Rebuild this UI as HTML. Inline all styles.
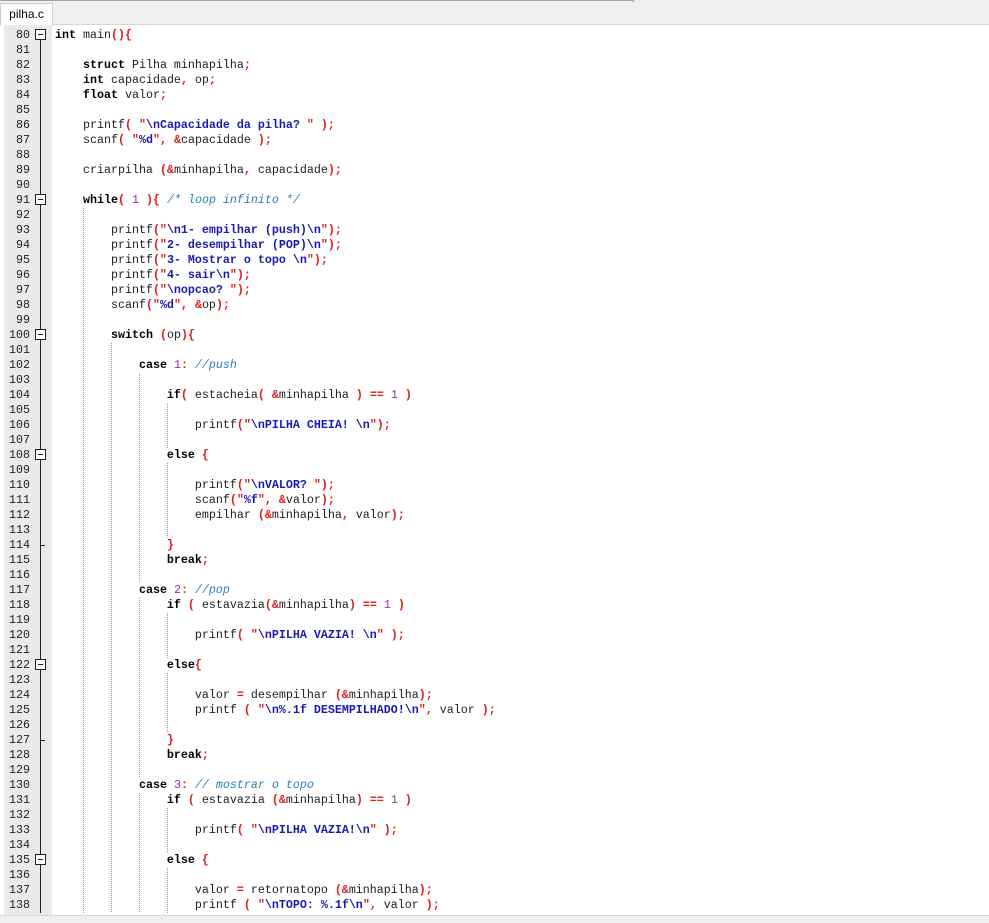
<!DOCTYPE html>
<html><head><meta charset="utf-8"><style>
html,body{margin:0;padding:0}
body{width:989px;height:922px;position:relative;overflow:hidden;background:#fff;font-family:"Liberation Mono",monospace}
#tabbar{position:absolute;left:0;top:0;width:989px;height:24px;background:#f0f0f0;border-bottom:1px solid #d6d6d6}
#topline{position:absolute;left:0;top:0;width:633px;height:1px;background:#a0a0a0}
#topline2{position:absolute;left:633px;top:0;width:1px;height:2px;background:#a0a0a0}
#tab{position:absolute;left:0;top:3px;width:51px;height:22px;background:#fff;border:1px solid #d0d0d0;border-bottom:none;font:12px "Liberation Sans",sans-serif;color:#000;line-height:20px;text-align:center}
#gutter{position:absolute;left:4px;top:25px;width:48px;height:890px;background:#eaeaea}
#nums{position:absolute;left:0;top:28px;width:30px;text-align:right;font-size:11.67px;line-height:15px;color:#222}
#fold{position:absolute;left:40px;top:35px;width:1px;height:878px;background:#222}
.box{position:absolute;left:35px;width:9px;height:9px;border:1px solid #222;background:#fff}
.box:after{content:"";position:absolute;left:2px;top:4px;width:5px;height:1px;background:#222}
.tick{position:absolute;left:40px;width:5px;height:1px;background:#222}
#code{position:absolute;left:55px;top:28px;font-size:11.67px;line-height:15px;white-space:pre;color:#1e1e1e}
.k{font-weight:bold;color:#000}
.p{font-weight:bold;color:#e01b1b}
.s{font-weight:bold;color:#1a1ab0}
.n{color:#9035a5}
.c{font-style:italic;color:#2a7fba}
.g{position:absolute;width:1px;background:repeating-linear-gradient(to bottom,#9a9a9a 0 1px,transparent 1px 2px)}
#bottom{position:absolute;left:0;top:915px;width:989px;height:7px;background:#f0f0f0;border-top:1px solid #d6d6d6}
</style></head><body>
<div id="tabbar"></div><div id="topline"></div><div id="topline2"></div>
<div id="tab">pilha.c</div>
<div id="gutter"></div>
<div id="nums">80<br>81<br>82<br>83<br>84<br>85<br>86<br>87<br>88<br>89<br>90<br>91<br>92<br>93<br>94<br>95<br>96<br>97<br>98<br>99<br>100<br>101<br>102<br>103<br>104<br>105<br>106<br>107<br>108<br>109<br>110<br>111<br>112<br>113<br>114<br>115<br>116<br>117<br>118<br>119<br>120<br>121<br>122<br>123<br>124<br>125<br>126<br>127<br>128<br>129<br>130<br>131<br>132<br>133<br>134<br>135<br>136<br>137<br>138</div>
<div id="fold"></div>
<div class="box" style="top:29px"></div>
<div class="box" style="top:194px"></div>
<div class="box" style="top:329px"></div>
<div class="box" style="top:449px"></div>
<div class="box" style="top:659px"></div>
<div class="box" style="top:854px"></div>
<div class="tick" style="top:545px"></div>
<div class="tick" style="top:740px"></div>

<div class="g" style="left:83px;top:208px;height:705px"></div>
<div class="g" style="left:111px;top:343px;height:570px"></div>
<div class="g" style="left:139px;top:373px;height:210px"></div>
<div class="g" style="left:139px;top:598px;height:180px"></div>
<div class="g" style="left:139px;top:793px;height:120px"></div>
<div class="g" style="left:167px;top:403px;height:45px"></div>
<div class="g" style="left:167px;top:463px;height:75px"></div>
<div class="g" style="left:167px;top:613px;height:45px"></div>
<div class="g" style="left:167px;top:673px;height:60px"></div>
<div class="g" style="left:167px;top:808px;height:45px"></div>
<div class="g" style="left:167px;top:868px;height:45px"></div>

<div id="code"><span class="k">int</span> main<span class="p">(){</span>

    <span class="k">struct</span> Pilha minhapilha<span class="p">;</span>
    <span class="k">int</span> capacidade<span class="p">,</span> op<span class="p">;</span>
    <span class="k">float</span> valor<span class="p">;</span>

    printf<span class="p">(</span> <span class="p">"</span><span class="s">\nCapacidade da pilha? </span><span class="p">"</span> <span class="p">);</span>
    scanf<span class="p">(</span> <span class="p">"</span><span class="s">%d</span><span class="p">",</span> <span class="p">&amp;</span>capacidade <span class="p">);</span>

    criarpilha <span class="p">(&amp;</span>minhapilha<span class="p">,</span> capacidade<span class="p">);</span>

    <span class="k">while</span><span class="p">(</span> <span class="n">1</span> <span class="p">){</span> <span class="c">/* loop infinito */</span>

        printf<span class="p">("</span><span class="s">\n1- empilhar (push)\n</span><span class="p">");</span>
        printf<span class="p">("</span><span class="s">2- desempilhar (POP)\n</span><span class="p">");</span>
        printf<span class="p">("</span><span class="s">3- Mostrar o topo \n</span><span class="p">");</span>
        printf<span class="p">("</span><span class="s">4- sair\n</span><span class="p">");</span>
        printf<span class="p">("</span><span class="s">\nopcao? </span><span class="p">");</span>
        scanf<span class="p">("</span><span class="s">%d</span><span class="p">",</span> <span class="p">&amp;</span>op<span class="p">);</span>

        <span class="k">switch</span> <span class="p">(</span>op<span class="p">){</span>

            <span class="k">case</span> <span class="n">1</span><span class="p">:</span> <span class="c">//push</span>

                <span class="k">if</span><span class="p">(</span> estacheia<span class="p">(</span> <span class="p">&amp;</span>minhapilha <span class="p">)</span> <span class="p">==</span> <span class="n">1</span> <span class="p">)</span>

                    printf<span class="p">("</span><span class="s">\nPILHA CHEIA! \n</span><span class="p">");</span>

                <span class="k">else</span> <span class="p">{</span>

                    printf<span class="p">("</span><span class="s">\nVALOR? </span><span class="p">");</span>
                    scanf<span class="p">("</span><span class="s">%f</span><span class="p">",</span> <span class="p">&amp;</span>valor<span class="p">);</span>
                    empilhar <span class="p">(&amp;</span>minhapilha<span class="p">,</span> valor<span class="p">);</span>

                <span class="p">}</span>
                <span class="k">break</span><span class="p">;</span>

            <span class="k">case</span> <span class="n">2</span><span class="p">:</span> <span class="c">//pop</span>
                <span class="k">if</span> <span class="p">(</span> estavazia<span class="p">(&amp;</span>minhapilha<span class="p">)</span> <span class="p">==</span> <span class="n">1</span> <span class="p">)</span>

                    printf<span class="p">(</span> <span class="p">"</span><span class="s">\nPILHA VAZIA! \n</span><span class="p">"</span> <span class="p">);</span>

                <span class="k">else</span><span class="p">{</span>

                    valor <span class="p">=</span> desempilhar <span class="p">(&amp;</span>minhapilha<span class="p">);</span>
                    printf <span class="p">(</span> <span class="p">"</span><span class="s">\n%.1f DESEMPILHADO!\n</span><span class="p">",</span> valor <span class="p">);</span>

                <span class="p">}</span>
                <span class="k">break</span><span class="p">;</span>

            <span class="k">case</span> <span class="n">3</span><span class="p">:</span> <span class="c">// mostrar o topo</span>
                <span class="k">if</span> <span class="p">(</span> estavazia <span class="p">(&amp;</span>minhapilha<span class="p">)</span> <span class="p">==</span> <span class="n">1</span> <span class="p">)</span>

                    printf<span class="p">(</span> <span class="p">"</span><span class="s">\nPILHA VAZIA!\n</span><span class="p">"</span> <span class="p">);</span>

                <span class="k">else</span> <span class="p">{</span>

                    valor <span class="p">=</span> retornatopo <span class="p">(&amp;</span>minhapilha<span class="p">);</span>
                    printf <span class="p">(</span> <span class="p">"</span><span class="s">\nTOPO: %.1f\n</span><span class="p">",</span> valor <span class="p">);</span></div>
<div id="bottom"></div>
</body></html>
